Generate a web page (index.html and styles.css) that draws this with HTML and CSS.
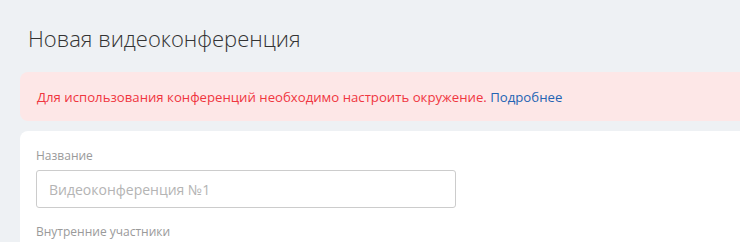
FILE: index.html
```html
<!DOCTYPE html>
<html lang="ru">
<head>
  <meta charset="UTF-8">
  <title>Новая видеоконференция</title>
  <link rel="stylesheet" href="styles.css">
</head>
<body>
  <div id="page">
    <h1 class="page-title">Новая видеоконференция</h1>

    <div class="alert">
      Для использования конференций необходимо настроить окружение.
      <a href="#" class="alert-link">Подробнее</a>
    </div>

    <div class="card">
      <div class="field">
        <label for="confName">Название</label>
        <input type="text" id="confName" placeholder="Видеоконференция №1">
      </div>
      <div class="field">
        <label>Внутренние участники</label>
      </div>
    </div>
  </div>
</body>
</html>
```

FILE: styles.css
```css
body {
  margin: 0;
  background-color: #eef1f4;
  font-family: "Open Sans", "Noto Sans", sans-serif;
  overflow: hidden;
}
#page {
  padding: 22px 0 0 20px;
  margin-right: -40px;
}
.page-title {
  margin: 0 0 18px 8px;
  font-size: 22px;
  font-weight: 300;
  color: #333;
  line-height: 32px;
}
.alert {
  background-color: #fde7e7;
  color: #f0363f;
  border-radius: 8px;
  padding: 17px 17px 15px;
  font-size: 13.2px;
  line-height: 17px;
}
.alert-link {
  color: #2464b4;
  text-decoration: none;
}
.card {
  margin-top: 10px;
  background-color: white;
  border-radius: 8px;
  padding: 16px 16px;
  height: 200px;
}
.field label {
  display: block;
  font-size: 12px;
  color: #9a9a9a;
  margin-bottom: 6px;
}
.field input {
  width: 420px;
  height: 38px;
  box-sizing: border-box;
  border: 1px solid #ccc;
  border-radius: 3px;
  padding: 0 12px;
  font-family: inherit;
  font-size: 14px;
  margin-bottom: 15px;
}
.field input::placeholder {
  color: #b4b4b4;
}
```
